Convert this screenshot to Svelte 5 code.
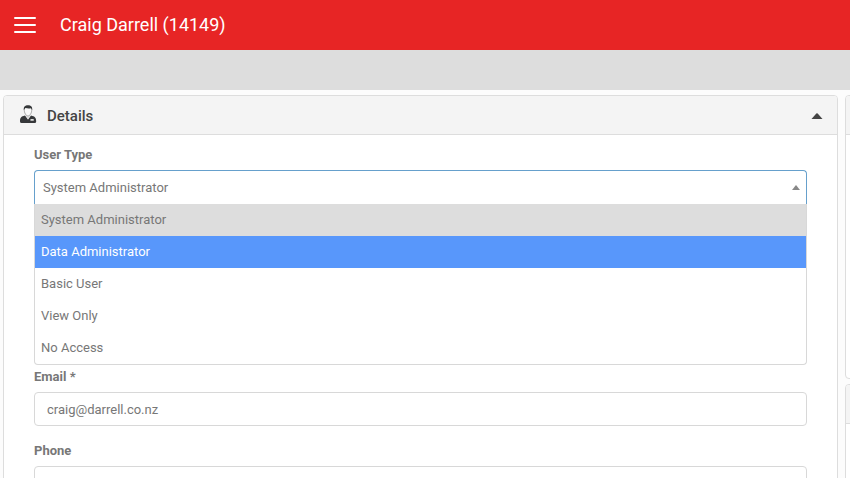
<script>
	let userTypes = ['System Administrator', 'Data Administrator', 'Basic User', 'View Only', 'No Access'];
	let selected = $state('System Administrator');
	let highlighted = $state('Data Administrator');
	let open = $state(true);
	let email = $state('craig@darrell.co.nz');
	let phone = $state('');

	function choose(type) {
		selected = type;
		open = false;
	}
</script>

<div class="page">
	<header class="topbar">
		<button class="menu" aria-label="Menu">
			<span></span>
			<span></span>
			<span></span>
		</button>
		<h1>Craig Darrell (14149)</h1>
	</header>

	<div class="toolbar"></div>

	<div class="columns">
		<section class="card main">
			<div class="card-header">
				<svg class="user-icon" width="18" height="20" viewBox="0 0 18 20">
					<path d="M1 17.5C1 13.8 2 12.6 6 11.6L9 15.6L12 11.6C16 12.6 17.2 13.8 17.2 17.5Q17.2 19 15.6 19H2.6Q1 19 1 17.5Z" fill="#36383a" />
					<path d="M6.4 11.2L9 15.6L11.6 11.2Z" fill="#ddd" />
					<path d="M5.2 5C5.2 9 6.9 11.9 9 11.9S12.8 9 12.8 5L11.7 3.5H6.3Z" fill="#fafafa" stroke="#888" stroke-width=".7" />
					<path d="M4.9 6C4.3 2.8 6 1.2 9 1.2s4.7 1.6 4.1 4.8L12 4.2Q9 4.7 6.4 3.9Z" fill="#36383a" />
					<rect x="11.4" y="15" width="3.4" height="1.8" rx=".5" fill="#ddd" />
				</svg>
				<h2>Details</h2>
				<svg class="collapse" width="12" height="6" viewBox="0 0 12 6">
					<path d="M.5 6 5.3.6Q6 0 6.7.6L11.5 6Z" fill="#444" />
				</svg>
			</div>

			<div class="card-body">
				<div class="field user-type">
					<span class="label">User Type</span>
					<div class="select">
						<button class="select-value" class:open onclick={() => (open = !open)}>
							{selected}
							<svg width="8" height="5" viewBox="0 0 8 5"><path d="M0 5 4 0 8 5Z" fill="#888" /></svg>
						</button>
						{#if open}
							<ul class="options" role="listbox">
								{#each userTypes as type}
									<li
										role="option"
										tabindex="-1"
										aria-selected={type === selected}
										class:selected={type === selected}
										class:highlighted={type === highlighted}
										onmouseenter={() => (highlighted = type)}
										onclick={() => choose(type)}
										onkeydown={(e) => e.key === 'Enter' && choose(type)}
									>
										{type}
									</li>
								{/each}
							</ul>
						{/if}
					</div>
				</div>

				<div class="field">
					<label class="label" for="email">Email *</label>
					<input id="email" type="text" bind:value={email} />
				</div>

				<div class="field">
					<label class="label" for="phone">Phone</label>
					<input id="phone" type="text" bind:value={phone} />
				</div>
			</div>
		</section>

		<div class="side">
			<section class="card first">
				<div class="card-header"></div>
			</section>
			<section class="card second">
				<div class="card-header"></div>
			</section>
		</div>
	</div>
</div>

<style>
	:global(body) {
		margin: 0;
		overflow: hidden;
	}

	.page {
		display: flex;
		flex-direction: column;
		height: 100vh;
		overflow: hidden;
		background: #fcfcfc;
		color: #777;
		font-family: Roboto, sans-serif;
		font-size: 13px;
	}

	.page * {
		box-sizing: border-box;
	}

	.topbar {
		display: flex;
		flex: none;
		align-items: center;
		height: 50px;
		padding-left: 14px;
		background: #e72525;
	}

	.menu {
		display: flex;
		flex-direction: column;
		gap: 5px;
		width: 22px;
		padding: 0;
		border: 0;
		background: none;
	}

	.menu span {
		height: 2px;
		border-radius: 1px;
		background: #fff;
	}

	h1 {
		margin: 0 0 0 24px;
		color: #fff;
		font-size: 18px;
		font-weight: 400;
		line-height: 50px;
	}

	.toolbar {
		flex: none;
		height: 40px;
		background: #ddd;
	}

	.columns {
		display: flex;
		flex: 1;
		gap: 7px;
		min-height: 0;
		padding: 5px 0 0 3px;
	}

	.card {
		border: 1px solid #ddd;
		border-radius: 4px;
		background: #fff;
	}

	.main {
		flex: none;
		width: 835px;
		height: 480px;
	}

	.card-header {
		display: flex;
		align-items: center;
		height: 39px;
		padding: 0 14px 0 15px;
		border-bottom: 1px solid #ddd;
		border-radius: 3px 3px 0 0;
		background: #f4f4f4;
	}

	.user-icon {
		margin-top: -2px;
	}

	h2 {
		margin: 2px 0 0 10px;
		color: #444;
		font-size: 15px;
		font-weight: 500;
	}

	.collapse {
		margin-left: auto;
		margin-top: 1px;
	}

	.card-body {
		padding: 11px 30px 0;
	}

	.field {
		height: 74px;
	}

	.user-type {
		height: 222px;
	}

	.label {
		display: block;
		height: 24px;
		font-weight: 700;
		line-height: 18px;
	}

	.select {
		position: relative;
	}

	.select-value {
		display: flex;
		align-items: center;
		justify-content: space-between;
		width: 100%;
		height: 34px;
		padding: 0 6px 0 8px;
		border: 1px solid #ddd;
		border-radius: 4px;
		background: #fff;
		color: #777;
		font: inherit;
	}

	.select-value.open {
		border-color: #66a0cc;
		border-bottom: 0;
		border-radius: 4px 4px 0 0;
	}

	.options {
		position: absolute;
		z-index: 1;
		top: 34px;
		left: 0;
		width: 100%;
		margin: 0;
		padding: 0;
		border: 1px solid #d8d8d8;
		border-top: 0;
		border-radius: 0 0 4px 4px;
		background: #fff;
		list-style: none;
	}

	.options li {
		height: 32px;
		padding: 0 6px;
		line-height: 31px;
	}

	.options .selected {
		background: #ddd;
	}

	.options .highlighted {
		background: #5897fb;
		color: #fff;
	}

	input {
		display: block;
		width: 100%;
		height: 34px;
		padding: 0 12px;
		border: 1px solid #d8d8d8;
		border-radius: 4px;
		background: #fff;
		color: #777;
		font: inherit;
	}

	.side {
		display: flex;
		flex: none;
		flex-direction: column;
		gap: 5px;
		width: 300px;
	}

	.first {
		flex: none;
		height: 284px;
	}

	.second {
		flex: none;
		height: 200px;
	}
</style>
